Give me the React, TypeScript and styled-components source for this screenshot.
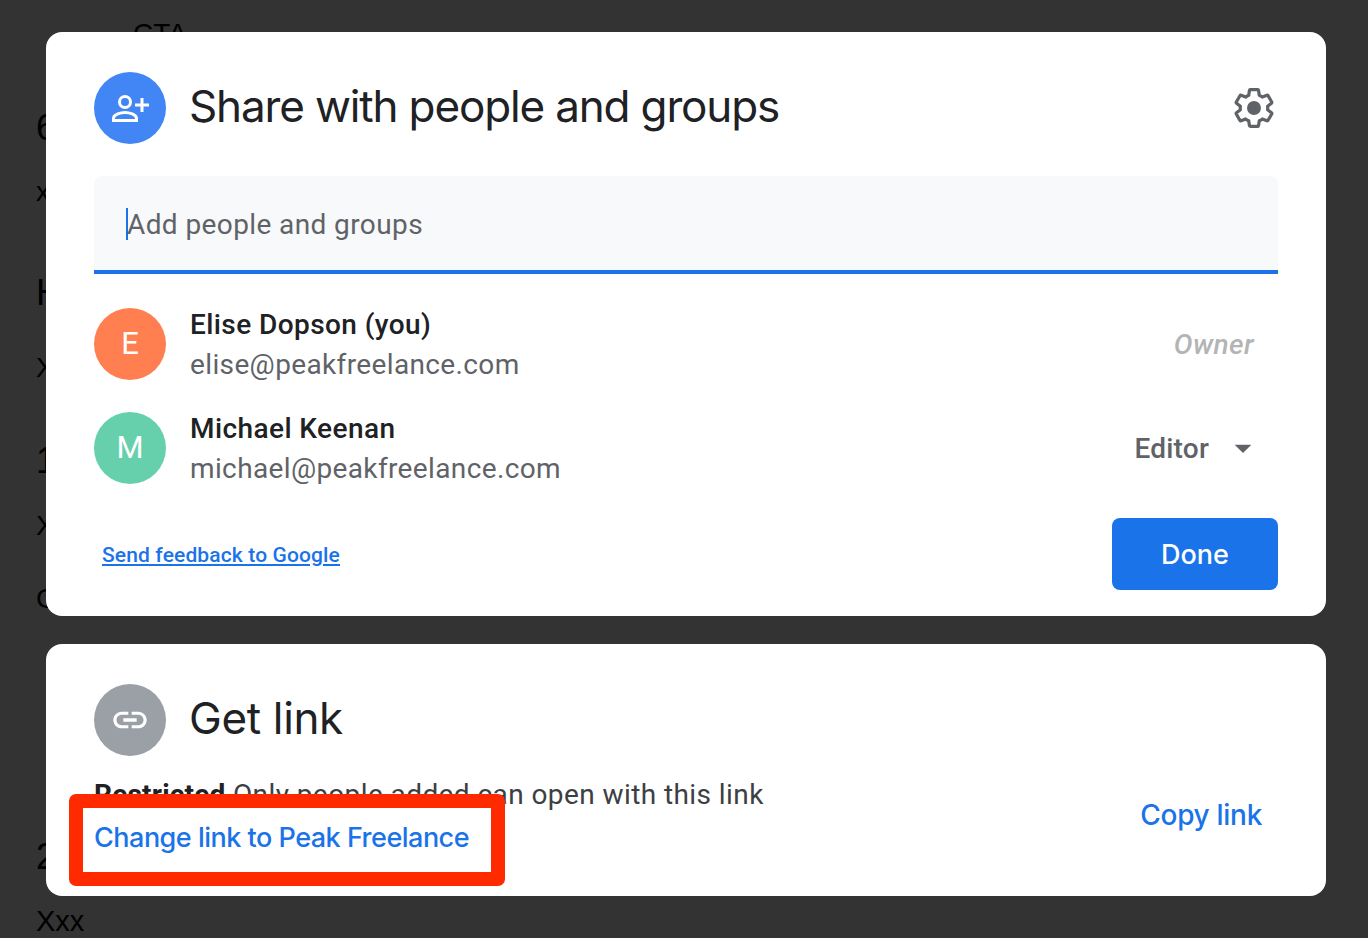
import React from 'react';
import styled, { createGlobalStyle } from 'styled-components';
import { MdArrowDropDown, MdLink } from 'react-icons/md';

const GlobalStyle = createGlobalStyle`
  html, body {
    margin: 0;
    padding: 0;
    background: #333333;
  }

  body {
    font-family: Roboto, "Liberation Sans", sans-serif;
    overflow: hidden;
  }
`;

const Page = styled.div`
  position: relative;
  width: 1368px;
  height: 938px;
  overflow: hidden;
  background: #333333;
`;

const Doc = styled.div`
  display: flex;
  flex-direction: column;
  padding-left: 36px;
  color: #000;
  font-family: "Liberation Sans", sans-serif;
`;

const DocLine = styled.div<{ $top: number; $size: number; $left?: number }>`
  height: ${(p) => p.$size}px;
  line-height: ${(p) => p.$size}px;
  font-size: ${(p) => p.$size}px;
  margin-top: ${(p) => p.$top}px;
  margin-left: ${(p) => p.$left ?? 0}px;
`;

const Overlay = styled.div`
  position: absolute;
  inset: 0;
  display: flex;
  flex-direction: column;
  gap: 28px;
  padding: 32px 42px 0 46px;
`;

const Card = styled.section<{ $height: number }>`
  position: relative;
  box-sizing: border-box;
  height: ${(p) => p.$height}px;
  padding: 40px 48px 0;
  background: #fff;
  border-radius: 16px;
`;

const Header = styled.div`
  display: flex;
  align-items: center;
  gap: 24px;
`;

const IconCircle = styled.div<{ $bg: string }>`
  display: flex;
  align-items: center;
  justify-content: center;
  flex: none;
  width: 72px;
  height: 72px;
  border-radius: 50%;
  background: ${(p) => p.$bg};
  color: #fff;
`;

const Title = styled.h1<{ $spacing: number }>`
  flex: 1;
  margin: 0 0 4px -1px;
  font-family: Inter, sans-serif;
  font-size: 44px;
  font-weight: 400;
  letter-spacing: ${(p) => p.$spacing}px;
  color: #202124;
`;

const Gear = styled.div`
  display: flex;
  margin-right: 2px;
  color: #5f6368;
`;

const Field = styled.div`
  display: flex;
  align-items: center;
  box-sizing: border-box;
  height: 98px;
  margin: 32px 0 34px;
  padding: 2px 32px 0;
  background: #f8f9fa;
  border-bottom: 4px solid #1a73e8;
  border-radius: 8px 8px 0 0;
  font-size: 28px;
  letter-spacing: 0.4px;
  color: #5f6368;
`;

const Caret = styled.span`
  width: 2px;
  height: 32px;
  margin-right: -1px;
  background: #1a73e8;
`;

const People = styled.div`
  display: flex;
  flex-direction: column;
  gap: 32px;
`;

const Person = styled.div`
  display: flex;
  align-items: center;
  gap: 24px;
`;

const Avatar = styled.div<{ $bg: string }>`
  display: flex;
  align-items: center;
  justify-content: center;
  flex: none;
  box-sizing: border-box;
  width: 72px;
  height: 72px;
  padding-bottom: 2px;
  border-radius: 50%;
  background: ${(p) => p.$bg};
  color: #fff;
  font-size: 31px;
  font-weight: 400;
`;

const PersonText = styled.div`
  flex: 1;
`;

const Name = styled.div`
  height: 36px;
  line-height: 34px;
  font-size: 28px;
  font-weight: 500;
  letter-spacing: 0.42px;
  color: #202124;
`;

const Email = styled.div`
  height: 36px;
  line-height: 42px;
  font-size: 28px;
  letter-spacing: 0.37px;
  color: #5f6368;
`;

const Owner = styled.div`
  margin-right: 24px;
  font-size: 28px;
  font-style: italic;
  font-weight: 500;
  letter-spacing: 0.4px;
  color: #b4b4b4;
`;

const Role = styled.div`
  display: flex;
  align-items: center;
  gap: 14px;
  margin-right: 15px;
  font-size: 28px;
  font-weight: 500;
  letter-spacing: 0.2px;
  color: #5f6368;
`;

const Footer = styled.div`
  display: flex;
  align-items: center;
  justify-content: space-between;
  margin-top: 34px;
  padding-left: 8px;
`;

const Feedback = styled.a`
  padding-top: 2px;
  font-size: 21px;
  font-weight: 500;
  letter-spacing: 0.13px;
  color: #1a73e8;
  text-decoration: underline;
`;

const DoneButton = styled.button`
  width: 166px;
  height: 72px;
  border: 0;
  border-radius: 8px;
  background: #1a73e8;
  color: #fff;
  font-family: Inter, sans-serif;
  font-size: 27px;
  font-weight: 500;
  letter-spacing: 0;
`;

const LinkBody = styled.div`
  display: flex;
  align-items: flex-start;
  justify-content: space-between;
  margin-top: 21px;
`;

const Restricted = styled.div`
  font-size: 28px;
  letter-spacing: 0.42px;
  line-height: 36px;
  color: #3c4043;

  strong {
    font-weight: 700;
    letter-spacing: 0.2px;
    color: #202124;
  }
`;

const CopyLink = styled.a`
  margin: 20px 16px 0 0;
  line-height: 36px;
  font-family: Inter, sans-serif;
  font-size: 28px;
  font-weight: 500;
  letter-spacing: -0.3px;
  color: #1a73e8;
`;

const Highlight = styled.div`
  position: absolute;
  left: 23px;
  top: 150px;
  display: flex;
  align-items: center;
  box-sizing: border-box;
  width: 436px;
  height: 92px;
  padding: 0 0 6px 11px;
  background: #fff;
  border: 14px solid #ff2a00;
  border-radius: 7px;
`;

const ChangeLink = styled.a`
  font-family: Inter, sans-serif;
  font-size: 27px;
  font-weight: 500;
  letter-spacing: -0.5px;
  color: #1a73e8;
`;

const PersonAddIcon = () => (
  <svg width="72" height="72" viewBox="0 0 72 72" fill="none" stroke="currentColor" strokeWidth="3">
    <circle cx="31" cy="30" r="5.5" />
    <path d="M19.5 48.5v-2.2c0-3.8 7.4-5.8 11.5-5.8s11.5 2 11.5 5.8v2.2z" />
    <path d="M41 33h14M48 26v14" />
  </svg>
);

const GearIcon = () => (
  <svg width="44" height="44" viewBox="0 0 24 24" fill="none" stroke="currentColor" strokeWidth="1.75" strokeLinejoin="round">
    <path d="M19.43 12.98c.04-.32.07-.64.07-.98 0-.34-.03-.66-.07-.98l2.11-1.65c.19-.15.24-.42.12-.64l-2-3.46c-.09-.16-.26-.25-.44-.25-.06 0-.12.01-.17.03l-2.49 1c-.52-.4-1.08-.73-1.69-.98l-.38-2.65C14.46 2.18 14.25 2 14 2h-4c-.25 0-.46.18-.49.42l-.38 2.65c-.61.25-1.17.59-1.69.98l-2.49-1c-.06-.02-.12-.03-.18-.03-.17 0-.34.09-.43.25l-2 3.46c-.13.22-.07.49.12.64l2.11 1.65c-.04.32-.07.65-.07.98 0 .33.03.66.07.98l-2.11 1.65c-.19.15-.24.42-.12.64l2 3.46c.09.16.26.25.44.25.06 0 .12-.01.17-.03l2.49-1c.52.4 1.08.73 1.69.98l.38 2.65c.03.24.24.42.49.42h4c.25 0 .46-.18.49-.42l.38-2.65c.61-.25 1.17-.59 1.69-.98l2.49 1c.06.02.12.03.18.03.17 0 .34-.09.43-.25l2-3.46c.12-.22.07-.49-.12-.64l-2.11-1.65z" />
    <circle cx="12" cy="12" r="3.8" fill="currentColor" stroke="none" />
  </svg>
);

const App = () => {
  return (
    <Page>
      <GlobalStyle />
      <Doc>
        <DocLine $top={20} $size={28} $left={97}>CTA</DocLine>
        <DocLine $top={62} $size={36}>6</DocLine>
        <DocLine $top={32} $size={28}>x</DocLine>
        <DocLine $top={69} $size={36}>H</DocLine>
        <DocLine $top={43} $size={28}>X</DocLine>
        <DocLine $top={61} $size={36}>1</DocLine>
        <DocLine $top={33} $size={28}>X</DocLine>
        <DocLine $top={45} $size={28}>C</DocLine>
        <DocLine $top={226} $size={36}>2</DocLine>
        <DocLine $top={32} $size={29}>Xxx</DocLine>
      </Doc>
      <Overlay>
        <Card $height={584}>
          <Header>
            <IconCircle $bg="#4285f4">
              <PersonAddIcon />
            </IconCircle>
            <Title $spacing={-1.15}>Share with people and groups</Title>
            <Gear>
              <GearIcon />
            </Gear>
          </Header>
          <Field>
            <Caret />
            Add people and groups
          </Field>
          <People>
            <Person>
              <Avatar $bg="#ff7f50">E</Avatar>
              <PersonText>
                <Name>Elise Dopson (you)</Name>
                <Email>elise@peakfreelance.com</Email>
              </PersonText>
              <Owner>Owner</Owner>
            </Person>
            <Person>
              <Avatar $bg="#66d0ac">M</Avatar>
              <PersonText>
                <Name>Michael Keenan</Name>
                <Email>michael@peakfreelance.com</Email>
              </PersonText>
              <Role>
                Editor
                <MdArrowDropDown size={40} />
              </Role>
            </Person>
          </People>
          <Footer>
            <Feedback>Send feedback to Google</Feedback>
            <DoneButton>Done</DoneButton>
          </Footer>
        </Card>
        <Card $height={252}>
          <Header>
            <IconCircle $bg="#9aa0a6">
              <MdLink size={40} />
            </IconCircle>
            <Title $spacing={-0.35}>Get link</Title>
          </Header>
          <LinkBody>
            <Restricted>
              <strong>Restricted</strong> Only people added can open with this link
            </Restricted>
            <CopyLink>Copy link</CopyLink>
          </LinkBody>
          <Highlight>
            <ChangeLink>Change link to Peak Freelance</ChangeLink>
          </Highlight>
        </Card>
      </Overlay>
    </Page>
  );
};

export default App;
